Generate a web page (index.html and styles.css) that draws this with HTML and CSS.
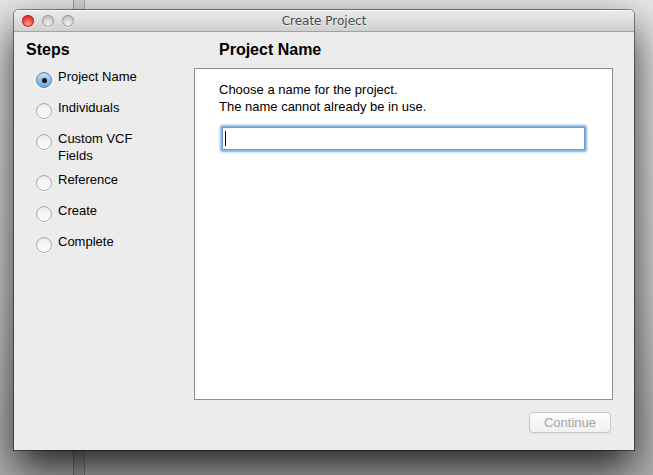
FILE: index.html
```html
<!DOCTYPE html>
<html lang="en">
<head>
<meta charset="utf-8">
<title>Create Project</title>
<link rel="stylesheet" href="styles.css">
</head>
<body>
<div class="desktop">
  <div class="bg-strip"></div>
  <div class="window">
    <div class="titlebar">
      <div class="lights">
        <span class="light close"></span>
        <span class="light"></span>
        <span class="light"></span>
      </div>
      <div class="title">Create Project</div>
      <div></div>
    </div>
    <div class="content">
      <aside class="sidebar">
        <h2 class="heading">Steps</h2>
        <ol class="steps">
          <li class="step active"><span class="radio"></span><span class="label">Project Name</span></li>
          <li class="step"><span class="radio"></span><span class="label">Individuals</span></li>
          <li class="step"><span class="radio"></span><span class="label">Custom VCF Fields</span></li>
          <li class="step"><span class="radio"></span><span class="label">Reference</span></li>
          <li class="step"><span class="radio"></span><span class="label">Create</span></li>
          <li class="step"><span class="radio"></span><span class="label">Complete</span></li>
        </ol>
      </aside>
      <main class="main">
        <h2 class="heading">Project Name</h2>
        <div class="panel">
          <p class="intro">Choose a name for the project.<br>The name cannot already be in use.</p>
          <div class="field"><span class="caret"></span></div>
        </div>
        <div class="footer">
          <button class="btn" disabled>Continue</button>
        </div>
      </main>
    </div>
  </div>
</div>
</body>
</html>
```

FILE: styles.css
```css
* { box-sizing: border-box; }

html, body {
  margin: 0;
  padding: 0;
}

body {
  width: 653px;
  height: 475px;
  overflow: hidden;
  font-family: "Liberation Sans", Arial, sans-serif;
  background: linear-gradient(#e6e6e6 0%, #d2d2d2 60%, #b0b0b0 100%);
}

.desktop {
  position: relative;
  width: 653px;
  height: 475px;
  padding: 10px 0 0 14px;
}

.bg-strip {
  position: absolute;
  left: 73px;
  top: 0;
  width: 12px;
  height: 475px;
  background: rgba(0, 0, 0, 0.07);
  border-left: 1px solid rgba(0, 0, 0, 0.25);
  border-right: 1px solid rgba(0, 0, 0, 0.2);
}

.window {
  position: relative;
  width: 620px;
  height: 440px;
  background: #ececec;
  border-radius: 5px 5px 0 0;
  box-shadow: 0 0 0 1px rgba(0, 0, 0, 0.42), 0 18px 42px rgba(0, 0, 0, 0.82);
  display: flex;
  flex-direction: column;
}

.titlebar {
  height: 22px;
  flex: none;
  display: grid;
  grid-template-columns: 1fr auto 1fr;
  align-items: center;
  border-radius: 5px 5px 0 0;
  background: linear-gradient(#ebebeb, #d0d0d0);
  border-bottom: 1px solid #a3a3a3;
  box-shadow: inset 0 1px 0 rgba(255, 255, 255, 0.7);
}

.lights {
  display: flex;
  gap: 8px;
  padding-left: 8px;
  padding-top: 1px;
}

.light {
  width: 12px;
  height: 12px;
  border-radius: 50%;
  background: radial-gradient(circle at 50% 70%, #f2f2f2 0%, #d2d2d2 45%, #b0b0b0 100%);
  box-shadow: inset 0 0 0 1px rgba(0, 0, 0, 0.22), 0 1px 0 rgba(255, 255, 255, 0.6);
}

.light.close {
  background: radial-gradient(circle at 50% 72%, #ffa396 0%, #f8463d 45%, #c81c1c 100%);
  box-shadow: inset 0 0 0 1px rgba(120, 0, 0, 0.4), 0 1px 0 rgba(255, 255, 255, 0.6);
}

.title {
  font-family: "DejaVu Sans", sans-serif;
  font-size: 12px;
  color: #4a4a4a;
  padding-top: 1px;
  text-shadow: 0 1px 0 rgba(255, 255, 255, 0.6);
}

.content {
  flex: 1;
  display: grid;
  grid-template-columns: 180px 1fr;
  min-height: 0;
}

.heading {
  margin: 0;
  font-size: 16px;
  line-height: 19px;
  font-weight: bold;
  color: #000;
}

.sidebar {
  padding-top: 8px;
}

.sidebar .heading {
  padding-left: 12px;
}

.steps {
  list-style: none;
  margin: 9px 0 0 0;
  padding: 0 0 0 22px;
  display: grid;
  grid-template-rows: 31px 31px 41px 31px 31px 31px;
}

.step {
  display: flex;
  align-items: flex-start;
  gap: 6px;
}

.radio {
  flex: none;
  width: 16px;
  height: 16px;
  margin-top: 4px;
  border-radius: 50%;
  border: 1px solid #acacac;
  background: linear-gradient(#eeeeee, #fdfdfd);
  box-shadow: inset 0 1px 1px rgba(0, 0, 0, 0.06), 0 1px 0 rgba(255, 255, 255, 0.8);
  display: flex;
  align-items: center;
  justify-content: center;
}

.step.active .radio {
  border-color: #5a87b8;
  background: linear-gradient(#cfe2f6, #8fbde9 55%, #6aa6e2);
}

.step.active .radio::after {
  content: "";
  width: 5px;
  height: 5px;
  border-radius: 50%;
  background: #111;
}

.label {
  font-size: 13px;
  line-height: 17px;
  color: #000;
  max-width: 90px;
}

.main {
  padding: 8px 21px 17px 0;
  display: flex;
  flex-direction: column;
  min-height: 0;
}

.main .heading {
  padding-left: 25px;
}

.panel {
  margin-top: 9px;
  height: 332px;
  background: #fff;
  border: 1px solid #8e8e8e;
  padding: 12px 24px 0 24px;
}

.intro {
  margin: 0;
  font-size: 13px;
  line-height: 17px;
  color: #000;
}

.field {
  margin: 12px 3px 0 3px;
  height: 23px;
  background: #fff;
  border: 1px solid #6f9ccb;
  box-shadow: 0 0 0 1px #86b6e2, 0 0 2px 2px rgba(94, 156, 216, 0.8);
  border-radius: 1px;
  padding: 3px 0 0 2px;
}

.caret {
  display: block;
  width: 1px;
  height: 15px;
  background: #000;
}

.footer {
  margin-top: 12px;
  display: flex;
  justify-content: flex-end;
  padding-right: 2px;
}

.btn {
  width: 82px;
  height: 21px;
  padding: 0;
  font-family: "Liberation Sans", Arial, sans-serif;
  font-size: 13px;
  color: #a3a3a3;
  background: linear-gradient(#fdfdfd, #f1f1f1);
  border: 1px solid #c6c6c6;
  border-radius: 4px;
  box-shadow: 0 1px 0 rgba(0, 0, 0, 0.04);
}
```
